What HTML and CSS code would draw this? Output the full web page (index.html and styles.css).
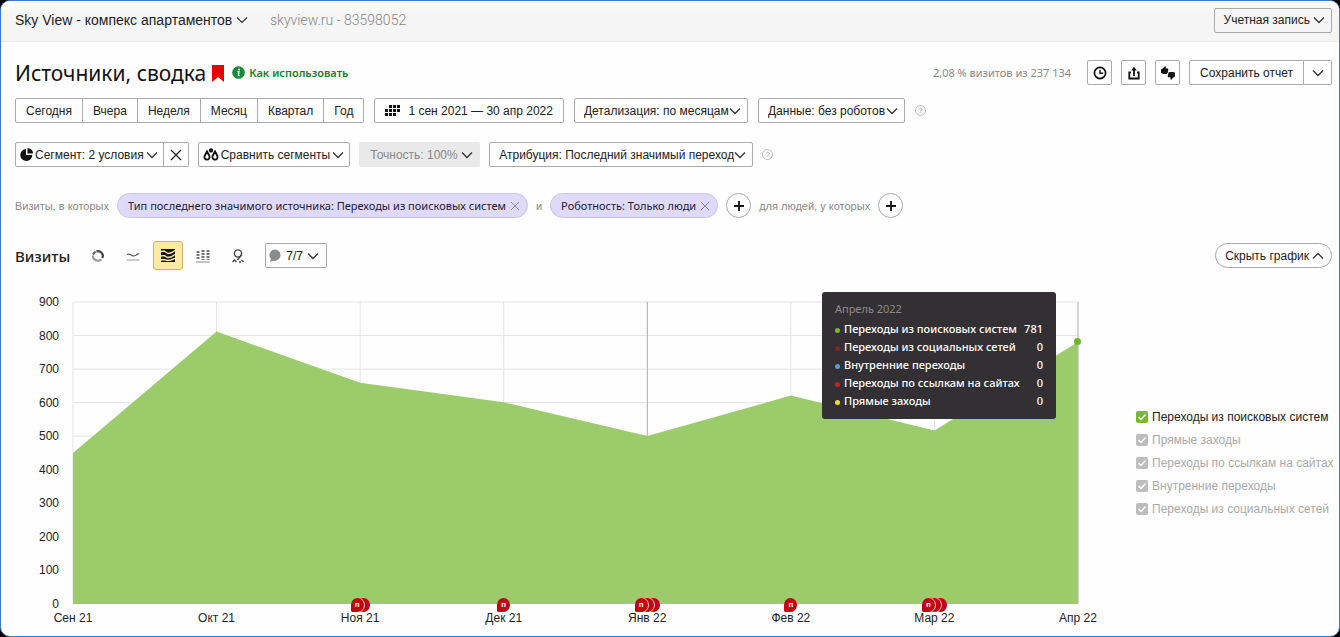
FILE: index.html
```html
<!DOCTYPE html>
<html lang="ru">
<head>
    <meta charset="utf-8">
    <title>Источники, сводка</title>
    <link rel="stylesheet" href="styles.css">
</head>
<body>

<div class="page">
    <header class="topbar">
        <select class="counter-select" aria-label="Счетчик">
            <option>Sky View - компекс апартаментов</option>
        </select>
        <span class="counter-info">skyview.ru - 83598052</span>
        <button type="button" class="btn account">Учетная запись
            <svg class="chevron" viewBox="0 0 12 8"><path d="M1 1.5l5 5 5-5"/></svg>
        </button>
    </header>

    <main>
        <div class="row title-row">
            <h1>Источники, сводка</h1>
            <svg class="bookmark" viewBox="0 0 12 17"><path d="M0 0h12v17l-6-5-6 5z" fill="#e60000"/></svg>
            <a href="#" class="howto">
                <svg viewBox="0 0 13 13" width="13" height="13"><circle cx="6.5" cy="6.5" r="6.3" fill="#148a3c"/><circle cx="7" cy="3.6" r="1" fill="#fff"/><path d="M5.4 5.6h1.5l-.6 4h1.3" fill="none" stroke="#fff" stroke-width="1.3"/></svg>
                Как использовать
            </a>
            <span class="visits-share">2,08 % визитов из 237 134</span>
            <div class="title-actions">
                <button type="button" class="btn icon-btn" aria-label="История">
                    <svg viewBox="0 0 16 16" width="16" height="16" fill="none" stroke="#111" stroke-width="1.7"><circle cx="8" cy="8" r="5.6"/><path d="M8 4.8V8.3h3.2" stroke-width="1.4"/></svg>
                </button>
                <button type="button" class="btn icon-btn" aria-label="Экспорт">
                    <svg viewBox="0 0 16 16" width="16" height="16" fill="none" stroke="#111" stroke-width="1.8"><path d="M5 7.3H3.3v6.2h9.4V7.3H11M8 11V3.4"/><path d="M5.2 5.6L8 1.8l2.8 3.8z" fill="#111" stroke="none"/></svg>
                </button>
                <button type="button" class="btn icon-btn" aria-label="Оценить">
                    <svg viewBox="0 0 16 16" width="16" height="16" fill="#111"><path d="M1 4.5l2-1.3L5 1.2l1 .6-.4 1.7h2.2l.6.8-.8 3.9-1 .8H3.4L1 8z"/><path d="M15 11.2l-2 1.6-1.6 2-1.1-.5.3-2H8.2l-.6-.9.9-3.7.9-.8h3.4L15 7.6z"/></svg>
                </button>
                <div class="btn-group">
                    <button type="button" class="btn">Сохранить отчет</button>
                    <button type="button" class="btn more" aria-label="Еще">
                        <svg class="chevron" viewBox="0 0 12 8"><path d="M1 1.5l5 5 5-5"/></svg>
                    </button>
                </div>
            </div>
        </div>

        <div class="row period-row">
            <div class="btn-group">
                <button type="button" class="btn">Сегодня</button>
                <button type="button" class="btn">Вчера</button>
                <button type="button" class="btn">Неделя</button>
                <button type="button" class="btn">Месяц</button>
                <button type="button" class="btn">Квартал</button>
                <button type="button" class="btn">Год</button>
            </div>
            <button type="button" class="btn dates">
                <svg viewBox="0 0 15 11" width="15" height="11" fill="#111"><path d="M4 0h3v3H4zM8 0h3v3H8zM12 0h3v3h-3zM0 4h3v3H0zM4 4h3v3H4zM8 4h3v3H8zM12 4h3v3h-3zM0 8h3v3H0zM4 8h3v3H4zM8 8h3v3H8z"/></svg>
                1 сен 2021 — 30 апр 2022
            </button>
            <select class="btn select" aria-label="Детализация">
                <option>Детализация: по месяцам</option>
            </select>
            <select class="btn select" aria-label="Данные">
                <option>Данные: без роботов</option>
            </select>
            <button type="button" class="hint" aria-label="Подсказка">?</button>
        </div>

        <div class="row segment-row">
            <div class="btn-group">
                <button type="button" class="btn tight">
                    <svg viewBox="0 0 13 13" width="13" height="13" fill="#111"><path d="M6 1v6h6.3A6 6 0 1 1 6 1z"/><path d="M7.5 0A5.5 5.5 0 0 1 13 5.5H7.5z"/></svg>
                    Сегмент: 2 условия
                    <svg class="chevron" viewBox="0 0 12 8"><path d="M1 1.5l5 5 5-5"/></svg>
                </button>
                <button type="button" class="btn clear" aria-label="Сбросить сегмент">
                    <svg viewBox="0 0 12 12" width="12" height="12"><path d="M1 1l10 10M11 1L1 11" stroke="#222" stroke-width="1.3"/></svg>
                </button>
            </div>
            <button type="button" class="btn tight">
                <svg viewBox="0 0 16 13" width="16" height="13" fill="none" stroke="#111" stroke-width="1.8"><path d="M4 3.5L1.6 8a2.6 2.6 0 1 0 4.8 0zM12 3.5L9.6 8a2.6 2.6 0 1 0 4.8 0z"/><circle cx="8" cy="2.4" r="1.3" fill="#111"/></svg>
                Сравнить сегменты
                <svg class="chevron" viewBox="0 0 12 8"><path d="M1 1.5l5 5 5-5"/></svg>
            </button>
            <select class="btn select" aria-label="Точность" disabled>
                <option>Точность: 100%</option>
            </select>
            <select class="btn select" aria-label="Атрибуция">
                <option>Атрибуция: Последний значимый переход</option>
            </select>
            <button type="button" class="hint" aria-label="Подсказка">?</button>
        </div>

        <div class="row filter-row">
            <span>Визиты, в которых</span>
            <span class="chip">Тип последнего значимого источника: Переходы из поисковых систем
                <button type="button" aria-label="Удалить условие"><svg viewBox="0 0 10 10" width="10" height="10"><path d="M1 1l8 8M9 1L1 9" stroke="#8d88a8"/></svg></button>
            </span>
            <span>и</span>
            <span class="chip">Роботность: Только люди
                <button type="button" aria-label="Удалить условие"><svg viewBox="0 0 10 10" width="10" height="10"><path d="M1 1l8 8M9 1L1 9" stroke="#8d88a8"/></svg></button>
            </span>
            <button type="button" class="add" aria-label="Добавить условие"><svg viewBox="0 0 10 10" width="10" height="10"><path d="M5 0v10M0 5h10" stroke="#111" stroke-width="1.8"/></svg></button>
            <span>для людей, у которых</span>
            <button type="button" class="add" aria-label="Добавить условие"><svg viewBox="0 0 10 10" width="10" height="10"><path d="M5 0v10M0 5h10" stroke="#111" stroke-width="1.8"/></svg></button>
        </div>

        <div class="row chart-row">
            <h2>Визиты</h2>
            <div class="chart-types">
                <button type="button" aria-label="Круговая">
                    <svg viewBox="0 0 16 16" width="16" height="16" fill="none"><path d="M6.5 3.4A5 4.6 0 0 1 12.2 10" stroke="#444" stroke-width="2.2"/><path d="M11.4 11.4A5 4.6 0 0 1 3 7.5" stroke="#999" stroke-width="2.2"/><path d="M2.8 6.6L5.6 3.6" stroke="#666" stroke-width="2.2"/></svg>
                </button>
                <button type="button" aria-label="Линии">
                    <svg viewBox="0 0 16 16" width="16" height="16" fill="none" stroke="#555" stroke-width="1.2"><path d="M2 6.5C4 5.5 5 6 7 7.5s3 0 7-2"/><path d="M1.5 12h13" stroke="#aaa"/></svg>
                </button>
                <button type="button" class="active" aria-label="Области">
                    <svg viewBox="0 0 14 13" width="14" height="13"><path d="M0 0h14v13H0z" fill="#111"/><path d="M0 2.500l3-.5 4 2.500 3-.5 4-2.500M0 7l3-.5 3.500 2L10 8l4-2.500M0 11l3-.5 3.500 1L10 11l4-1.500" fill="none" stroke="#ffe9a3" stroke-width="1.400"/></svg>
                </button>
                <button type="button" aria-label="Столбцы">
                    <svg viewBox="0 0 16 16" width="16" height="16" fill="none" stroke="#777" stroke-width="3" stroke-dasharray="2 1"><path d="M3 3v9M8 2v10M13 2v10"/><path d="M1 14h14" stroke="#888" stroke-width="1" stroke-dasharray="none"/></svg>
                </button>
                <button type="button" aria-label="Карта">
                    <svg viewBox="0 0 16 16" width="16" height="16" fill="none" stroke="#444" stroke-width="1.4"><circle cx="8" cy="5.5" r="3.6"/><path d="M11.3 7L7.5 12M2.5 14l2-2 2 2M9 14h2M11.5 12l2 2"/></svg>
                </button>
            </div>
            <button type="button" class="btn notes">
                <svg viewBox="0 0 13 13" width="13" height="13"><path d="M6.5 .5a6 5.7 0 1 1-2 11.3L1 12.8l.8-3A6 5.7 0 0 1 6.5.5z" fill="#8c8c8c"/></svg>
                7/7
                <svg class="chevron" viewBox="0 0 12 8"><path d="M1 1.5l5 5 5-5"/></svg>
            </button>
            <button type="button" class="btn hide-chart">Скрыть график
                <svg class="chevron" viewBox="0 0 12 8"><path d="M1 6.5l5-5 5 5"/></svg>
            </button>
        </div>

        <div class="chart">
            <div class="y-axis">
                <span>900</span><span>800</span><span>700</span><span>600</span><span>500</span><span>400</span><span>300</span><span>200</span><span>100</span><span>0</span>
            </div>
            <div class="plot">
                <svg class="area" viewBox="0 0 700 900" preserveAspectRatio="none">
                    <path class="grid-line" d="M0 0H700M0 100H700M0 200H700M0 300H700M0 400H700M0 500H700"/>
                    <path class="grid-line" d="M0 0V900M100 0V900M200 0V900M300 0V900M500 0V900M600 0V900"/>
                    <path class="grid-line strong" d="M400 0V900M700 0V900"/>
                    <path class="fill" d="M0 900V450L100 88L200 241L300 299L400 399L500 279L600 383L700 119V900z"/>
                </svg>
                <span class="point"></span>
                <div class="tooltip">
                    <table>
                        <caption>Апрель 2022</caption>
                        <tr><th class="green">Переходы из поисковых систем</th><td>781</td></tr>
                        <tr><th class="wine">Переходы из социальных сетей</th><td>0</td></tr>
                        <tr><th class="blue">Внутренние переходы</th><td>0</td></tr>
                        <tr><th class="red">Переходы по ссылкам на сайтах</th><td>0</td></tr>
                        <tr><th class="yellow">Прямые заходы</th><td>0</td></tr>
                    </table>
                </div>
            </div>
            <div class="legend">
                <label class="on"><input type="checkbox" checked>Переходы из поисковых систем</label>
                <label><input type="checkbox" checked>Прямые заходы</label>
                <label><input type="checkbox" checked>Переходы по ссылкам на сайтах</label>
                <label><input type="checkbox" checked>Внутренние переходы</label>
                <label><input type="checkbox" checked>Переходы из социальных сетей</label>
            </div>
            <div class="x-axis">
                <div class="month"><div class="marks"></div>Сен 21</div>
                <div class="month"><div class="marks"></div>Окт 21</div>
                <div class="month"><div class="marks"><b>п</b><i></i></div>Ноя 21</div>
                <div class="month"><div class="marks"><b>п</b></div>Дек 21</div>
                <div class="month"><div class="marks"><b>п</b><i></i><i></i></div>Янв 22</div>
                <div class="month"><div class="marks"><b>п</b></div>Фев 22</div>
                <div class="month"><div class="marks"><b>п</b><i></i><i></i></div>Мар 22</div>
                <div class="month"><div class="marks"></div>Апр 22</div>
            </div>
        </div>
    </main>
</div>

</body>
</html>
```

FILE: styles.css
```css
* {
    box-sizing: border-box;
}
body {
    margin: 0;
    background-color: #000;
    font-family: "Liberation Sans", Arial, sans-serif;
    font-size: 12px;
    color: #222;
}
.page {
    min-height: 100vh;
    background-color: #fefefe;
    border: 1px solid #3d7cc4;
    border-radius: 10px;
    overflow: hidden;
}
button, select, input {
    font: inherit;
    color: inherit;
    margin: 0;
}
button {
    cursor: pointer;
}
svg {
    flex: none;
}

/* top bar */
.topbar {
    display: flex;
    align-items: center;
    height: 41px;
    padding: 0 7px 2px 14px;
    background: linear-gradient(#fefefe, #f6f5f6 30%, #f6f5f6);
    border-bottom: 1px solid #ebebeb;
}
.counter-select {
    appearance: none;
    border: none;
    padding: 0 15px 0 0;
    font-size: 14px;
    background: url("data:image/svg+xml,%3Csvg xmlns='http://www.w3.org/2000/svg' width='12' height='8'%3E%3Cpath d='M1 1.5l5 5 5-5' fill='none' stroke='%23333' stroke-width='1.2'/%3E%3C/svg%3E") no-repeat right center;
}
.counter-info {
    margin-left: 22px;
    font-family: Roboto, sans-serif;
    font-size: 14px;
    font-weight: 300;
    color: #888;
}

/* buttons */
.btn {
    display: flex;
    align-items: center;
    justify-content: center;
    gap: 4px;
    height: 25px;
    padding: 0 10px;
    border: 1px solid #aaa;
    border-radius: 2px;
    background-color: transparent;
    white-space: nowrap;
}
.chevron {
    width: 12px;
    height: 8px;
    fill: none;
    stroke: #333;
    stroke-width: 1.3;
}
.select {
    appearance: none;
    padding: 0 18px 0 9px;
    background: url("data:image/svg+xml,%3Csvg xmlns='http://www.w3.org/2000/svg' width='12' height='8'%3E%3Cpath d='M1 1.5l5 5 5-5' fill='none' stroke='%23333' stroke-width='1.3'/%3E%3C/svg%3E") no-repeat right 6px center;
}
.select:disabled {
    padding: 0 21px 0 10px;
    background-color: #e9e9e9;
    border-color: #e9e9e9;
    color: #888;
    opacity: 1;
}
.btn-group {
    display: flex;
}
.btn-group .btn {
    border-radius: 0;
}
.btn-group .btn:first-child {
    border-radius: 2px 0 0 2px;
}
.btn-group .btn:last-child {
    border-radius: 0 2px 2px 0;
}
.btn-group .btn + .btn {
    border-left: none;
}
.account {
    margin-left: auto;
    padding: 0 6px 0 9px;
    gap: 3px;
}
.btn.tight {
    padding: 0 5px 0 4px;
    gap: 2px;
}
.icon-btn, .clear {
    width: 25px;
    padding: 0;
}
.more {
    width: 28px;
    padding: 0;
}
.dates {
    gap: 8px;
}
.hint {
    width: 11px;
    height: 11px;
    padding: 0;
    border: 1px solid #bbb;
    border-radius: 50%;
    background: none;
    font-size: 8px;
    line-height: 8px;
    color: #999;
}

/* rows */
main {
    padding: 18px 7px 0 14px;
}
.row {
    display: flex;
    align-items: center;
}
h1 {
    margin: 0;
    font-family: "Noto Sans", sans-serif;
    font-size: 21px;
    font-weight: 400;
    line-height: 24px;
    color: #111;
}
.bookmark {
    width: 12px;
    height: 17px;
    margin: 2px 8px 0 6px;
}
.howto {
    display: flex;
    align-items: center;
    gap: 4px;
    font-family: "Noto Sans", sans-serif;
    font-size: 11px;
    font-weight: 600;
    color: #14802b;
    text-decoration: none;
}
.visits-share {
    margin-left: auto;
    margin-right: 16px;
    font-family: "Noto Sans", sans-serif;
    font-size: 11px;
    color: #888;
}
.title-actions {
    display: flex;
    gap: 9px;
}
.period-row {
    gap: 10px;
    margin-top: 13px;
}
.segment-row {
    gap: 9px;
    margin-top: 19px;
}
.filter-row {
    gap: 8px;
    margin-top: 26px;
    color: #888;
    font-size: 11px;
}
.chip {
    display: flex;
    align-items: center;
    gap: 4px;
    height: 25px;
    padding: 0 7px 0 10px;
    border: 1px solid #c9c4e4;
    border-radius: 13px;
    background-color: #dfdafa;
    font-family: "Noto Sans", sans-serif;
    color: #1d1a33;
}
.chip button {
    display: flex;
    padding: 0;
    border: none;
    background: none;
}
.add {
    display: flex;
    align-items: center;
    justify-content: center;
    width: 25px;
    height: 25px;
    padding: 0;
    border: 1px solid #aaa;
    border-radius: 50%;
    background: none;
}
.chart-row {
    margin-top: 23px;
}
h2 {
    margin: 0;
    font-family: "Noto Sans", sans-serif;
    font-size: 15px;
    font-weight: 500;
    line-height: 20px;
}
.chart-types {
    display: flex;
    gap: 5px;
    margin: 0 12px 0 13px;
}
.chart-types button {
    display: flex;
    align-items: center;
    justify-content: center;
    width: 30px;
    height: 29px;
    padding: 0;
    border: 1px solid transparent;
    border-radius: 3px;
    background: none;
}
.chart-types .active {
    border-color: #c9b26a;
    background-color: #ffe9a3;
}
.notes {
    padding: 0 7px 0 3px;
}
.hide-chart {
    margin-left: auto;
    padding: 0 7px 0 9px;
    gap: 3px;
    border-radius: 13px;
}

/* chart */
.chart {
    display: grid;
    grid-template-columns: 44px 1fr 196px;
    column-gap: 14px;
    margin-top: 32px;
}
.y-axis {
    display: flex;
    flex-direction: column;
    justify-content: space-between;
    height: 302px;
    text-align: right;
}
.y-axis span {
    height: 0;
    line-height: 0;
}
.plot {
    position: relative;
    height: 302px;
    margin-right: 44px;
}
.area {
    display: block;
    width: 100%;
    height: 100%;
    overflow: visible;
}
.grid-line {
    fill: none;
    stroke: #e4e4e4;
    stroke-width: 1px;
    vector-effect: non-scaling-stroke;
}
.grid-line.strong {
    stroke: #aaa;
}
.fill {
    fill: #9bcb6b;
}
.point {
    position: absolute;
    right: -3px;
    top: 36px;
    width: 7px;
    height: 7px;
    border-radius: 50%;
    background-color: #6fb52c;
}
.tooltip {
    position: absolute;
    top: -10px;
    right: 22px;
    width: 234px;
    padding: 8px 13px 9px;
    border-radius: 3px;
    background-color: #323033;
    color: #fff;
    font-family: "Noto Sans", sans-serif;
    font-size: 11px;
    line-height: 18px;
}
.tooltip table {
    width: 100%;
    border-collapse: collapse;
}
.tooltip caption {
    padding-bottom: 2px;
    text-align: left;
    color: #8d8b8e;
}
.tooltip th, .tooltip td {
    padding: 0;
    text-align: left;
    font-weight: 500;
    white-space: nowrap;
}
.tooltip td {
    text-align: right;
}
.tooltip th::before {
    content: "";
    display: inline-block;
    width: 5px;
    height: 5px;
    margin-right: 4px;
    border-radius: 50%;
    background-color: #7ab82e;
    vertical-align: middle;
}
.tooltip .wine::before {
    background-color: #8a1f3c;
}
.tooltip .blue::before {
    background-color: #5b9bd5;
}
.tooltip .red::before {
    background-color: #d81920;
}
.tooltip .yellow::before {
    background-color: #f2dc2e;
}
.legend {
    display: flex;
    flex-direction: column;
    gap: 9px;
    padding-top: 108px;
}
.legend label {
    display: flex;
    align-items: center;
    gap: 4px;
    line-height: 14px;
    color: #aaa;
    white-space: nowrap;
}
.legend .on {
    color: #222;
}
.legend input {
    appearance: none;
    flex: none;
    width: 12px;
    height: 12px;
    border-radius: 2px;
    background: #bdbdbd url("data:image/svg+xml,%3Csvg xmlns='http://www.w3.org/2000/svg' width='12' height='12'%3E%3Cpath d='M2.5 6l2.5 2.5 4.5-5' fill='none' stroke='%23fff' stroke-width='1.5'/%3E%3C/svg%3E") no-repeat center;
}
.legend .on input {
    background-color: #7ab82e;
}
.x-axis {
    grid-column: 2;
    display: flex;
    justify-content: space-between;
    margin: -6px 44px 0 0;
    position: relative;
}
.month {
    display: flex;
    flex-direction: column;
    align-items: center;
    width: 0;
    white-space: nowrap;
    line-height: 13px;
}
.marks {
    display: flex;
    height: 14px;
}
.marks b {
    position: relative;
    z-index: 3;
    width: 13px;
    height: 14px;
    border-radius: 50% 50% 50% 10%;
    background-color: #c4000f;
    color: #fff;
    font-size: 8px;
    line-height: 14px;
    text-align: center;
}
.marks i {
    position: relative;
    z-index: 2;
    width: 13px;
    height: 14px;
    margin-left: -7px;
    border-radius: 50%;
    background-color: #c4000f;
}
.marks i:last-child {
    z-index: 1;
}
.marks b:not(:last-child), .marks i:not(:last-child) {
    box-shadow: 1px 0 0 #f3c9cc;
}
```
